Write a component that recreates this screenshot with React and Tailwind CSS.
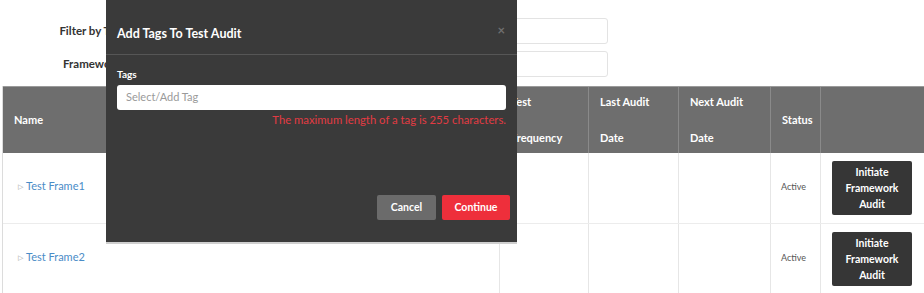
import React from "react";

const font = { fontFamily: "Lato, 'Liberation Sans', sans-serif" };

function HeaderCell({ children, className = "" }) {
  return (
    <div className={`flex items-center border-r border-[#8a8a8a] px-[11px] text-[11px] font-bold text-white ${className}`}>
      {children}
    </div>
  );
}

function Row({ name }) {
  return (
    <div className="grid h-[71px] grid-cols-[497px_89px_90px_92px_50px_1fr] border-b border-[#ececec]">
      <div className="flex items-center border-r border-[#e6e6e6] pb-[3px] pl-[15px] text-[11px] text-[#4a8cc7]">
        <span className="mr-[3px] text-[7px] text-[#999]">▷</span>
        {name}
      </div>
      <div className="border-r border-[#e6e6e6]" />
      <div className="border-r border-[#e6e6e6]" />
      <div className="border-r border-[#e6e6e6]" />
      <div className="flex items-center border-r border-[#e6e6e6] pb-[3px] pl-[10px] text-[9px] text-[#555]">Active</div>
      <div className="flex items-center pl-[11px]">
        <button className="flex h-[54px] w-[80px] flex-col items-center justify-center rounded-[2px] bg-[#363636] text-[10.5px] font-bold leading-[16px] text-white">
          <span>Initiate</span>
          <span>Framework</span>
          <span>Audit</span>
        </button>
      </div>
    </div>
  );
}

export default function App() {
  return (
    <div className="relative h-[293px] w-[924px] overflow-hidden bg-white" style={font}>
      {/* Filters */}
      <div className="flex flex-col gap-[7px] pt-[18px]">
        <div className="flex items-center">
          <div className="w-[121px] text-right text-[11.5px] font-bold text-[#333]">Filter by Tag</div>
          <div className="ml-[12px] h-[26px] w-[475px] rounded-[3px] border border-[#e3e3e3]" />
        </div>
        <div className="flex items-center">
          <div className="w-[121px] text-right text-[11.5px] font-bold text-[#333]">Framework</div>
          <div className="ml-[12px] h-[26px] w-[475px] rounded-[3px] border border-[#e3e3e3]" />
        </div>
      </div>

      {/* Table */}
      <div className="ml-[2px] mt-[9px] border-l border-[#dcdcdc]">
        <div className="grid h-[67px] grid-cols-[497px_89px_90px_92px_50px_1fr] border-t border-[#9a9a9a] bg-[#6e6e6e]">
          <HeaderCell>Name</HeaderCell>
          <HeaderCell className="flex-col !items-start justify-center gap-[19px]">
            <span>Test</span>
            <span>Frequency</span>
          </HeaderCell>
          <HeaderCell className="flex-col !items-start justify-center gap-[19px]">
            <span>Last Audit</span>
            <span>Date</span>
          </HeaderCell>
          <HeaderCell className="flex-col !items-start justify-center gap-[19px]">
            <span>Next Audit</span>
            <span>Date</span>
          </HeaderCell>
          <HeaderCell>Status</HeaderCell>
          <div />
        </div>
        <Row name="Test Frame1" />
        <Row name="Test Frame2" />
      </div>

      {/* Modal */}
      <div className="absolute left-[106px] top-0 flex h-[244px] w-[411px] flex-col border-b-2 border-[#cfcfcf] bg-[#3a3a3a]">
        <div className="flex h-[55px] items-start justify-between border-b border-[#565656] pl-[11px] pr-[12px] pt-[26px]">
          <span className="text-[12.5px] font-bold leading-[16px] text-white">Add Tags To Test Audit</span>
          <span className="mt-[-4px] text-[13px] font-bold leading-[16px] text-[#6f6f6f]">×</span>
        </div>
        <div className="flex flex-col px-[11px] pt-[12px]">
          <span className="text-[10px] font-bold leading-[14px] text-white">Tags</span>
          <div className="mt-[4px] flex h-[25px] items-center rounded-[3px] bg-white pl-[9px] text-[11px] text-[#9a9a9a]">
            Select/Add Tag
          </div>
          <div className="mt-[2px] text-right text-[11.3px] leading-[16px] text-[#e23a43]">
            The maximum length of a tag is 255 characters.
          </div>
        </div>
        <div className="mt-auto flex justify-end gap-[6px] pb-[22px] pr-[7px]">
          <button className="h-[25px] w-[59px] rounded-[2px] bg-[#6b6b6b] text-[10.5px] font-bold text-white">Cancel</button>
          <button className="h-[25px] w-[68px] rounded-[2px] bg-[#ee2f3b] text-[10.5px] font-bold text-white">Continue</button>
        </div>
      </div>
    </div>
  );
}
